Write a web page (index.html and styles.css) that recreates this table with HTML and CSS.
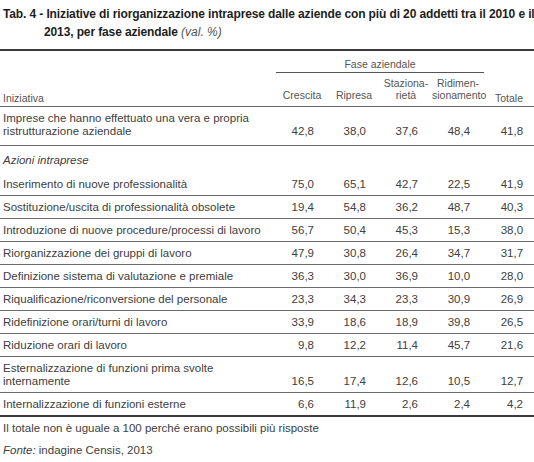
FILE: index.html
```html
<!DOCTYPE html>
<html lang="it">
<head>
<meta charset="utf-8">
<title>Tab. 4</title>
<link rel="stylesheet" href="styles.css">
</head>
<body>
<div class="page">
  <h1 class="title"><span class="lead">Tab. 4 - </span>Iniziative di riorganizzazione intraprese dalle aziende con più di 20 addetti tra il 2010 e il<br>2013, per fase aziendale <span class="unit">(val. %)</span></h1>
  <table class="data">
    <colgroup>
      <col class="c-label">
      <col class="c-num"><col class="c-num"><col class="c-num"><col class="c-num">
      <col class="c-tot">
    </colgroup>
    <thead>
      <tr class="h1">
        <th class="lbl" rowspan="2">Iniziativa</th>
        <th class="group" colspan="4">Fase aziendale</th>
        <th class="tot" rowspan="2">Totale</th>
      </tr>
      <tr class="h2">
        <th>Crescita</th>
        <th>Ripresa</th>
        <th>Staziona-<br>rietà</th>
        <th>Ridimen-<br>sionamento</th>
      </tr>
    </thead>
    <tbody>
      <tr class="first">
        <td class="lbl">Imprese che hanno effettuato una vera e propria<br>ristrutturazione aziendale</td>
        <td>42,8</td><td>38,0</td><td>37,6</td><td>48,4</td><td class="tot">41,8</td>
      </tr>
      <tr class="section">
        <td class="lbl" colspan="6">Azioni intraprese</td>
      </tr>
      <tr>
        <td class="lbl">Inserimento di nuove professionalità</td>
        <td>75,0</td><td>65,1</td><td>42,7</td><td>22,5</td><td class="tot">41,9</td>
      </tr>
      <tr>
        <td class="lbl">Sostituzione/uscita di professionalità obsolete</td>
        <td>19,4</td><td>54,8</td><td>36,2</td><td>48,7</td><td class="tot">40,3</td>
      </tr>
      <tr>
        <td class="lbl">Introduzione di nuove procedure/processi di lavoro</td>
        <td>56,7</td><td>50,4</td><td>45,3</td><td>15,3</td><td class="tot">38,0</td>
      </tr>
      <tr>
        <td class="lbl">Riorganizzazione dei gruppi di lavoro</td>
        <td>47,9</td><td>30,8</td><td>26,4</td><td>34,7</td><td class="tot">31,7</td>
      </tr>
      <tr>
        <td class="lbl">Definizione sistema di valutazione e premiale</td>
        <td>36,3</td><td>30,0</td><td>36,9</td><td>10,0</td><td class="tot">28,0</td>
      </tr>
      <tr>
        <td class="lbl">Riqualificazione/riconversione del personale</td>
        <td>23,3</td><td>34,3</td><td>23,3</td><td>30,9</td><td class="tot">26,9</td>
      </tr>
      <tr>
        <td class="lbl">Ridefinizione orari/turni di lavoro</td>
        <td>33,9</td><td>18,6</td><td>18,9</td><td>39,8</td><td class="tot">26,5</td>
      </tr>
      <tr>
        <td class="lbl">Riduzione orari di lavoro</td>
        <td>9,8</td><td>12,2</td><td>11,4</td><td>45,7</td><td class="tot">21,6</td>
      </tr>
      <tr>
        <td class="lbl">Esternalizzazione di funzioni prima svolte<br>internamente</td>
        <td>16,5</td><td>17,4</td><td>12,6</td><td>10,5</td><td class="tot">12,7</td>
      </tr>
      <tr class="last">
        <td class="lbl">Internalizzazione di funzioni esterne</td>
        <td>6,6</td><td>11,9</td><td>2,6</td><td>2,4</td><td class="tot">4,2</td>
      </tr>
    </tbody>
  </table>
  <p class="note">Il totale non è uguale a 100 perché erano possibili più risposte</p>
  <p class="source"><em>Fonte:</em> indagine Censis, 2013</p>
</div>
</body>
</html>
```

FILE: styles.css
```css
html, body {
  margin: 0;
  padding: 0;
  background: #ffffff;
  overflow: hidden;
}

.page {
  width: 534px;
  font-family: "Liberation Sans", Arial, sans-serif;
  color: #404040;
}

.title {
  margin: 0;
  padding: 5px 0 0 44px;
  text-indent: -41px;
  font-size: 12px;
  line-height: 18px;
  font-weight: bold;
  letter-spacing: -0.12px;
  color: #1e1e1e;
  height: 44px;
  box-sizing: border-box;
  white-space: nowrap;
}

.title .unit {
  font-weight: normal;
  font-style: italic;
  color: #555;
  letter-spacing: 0;
}

.data {
  width: 534px;
  border-collapse: collapse;
  table-layout: fixed;
  border-top: 2px solid #3a3a3a;
  border-bottom: 2px solid #3a3a3a;
  margin-top: 5px;
}

.c-label { width: 276px; }
.c-num { width: 52px; }
.c-tot { width: 50px; }

.data th {
  font-weight: normal;
  font-size: 10.5px;
  line-height: 12px;
  color: #555;
  text-align: center;
  padding: 0;
}

.data thead tr.h1 th {
  padding-top: 7px;
  padding-bottom: 2px;
}

.data th.group {
  border-bottom: 1px solid #555;
}

.data thead tr.h2 th {
  padding-top: 4px;
  padding-bottom: 5px;
  vertical-align: bottom;
}

.data th.lbl {
  text-align: left;
  padding-left: 3px;
  vertical-align: bottom;
  padding-bottom: 5px;
}

.data th.tot {
  vertical-align: bottom;
  padding-bottom: 5px;
  text-align: right;
  padding-right: 11px;
}

.data thead {
  border-bottom: 1px solid #666;
}

.data td {
  font-size: 11.5px;
  line-height: 13px;
  padding: 5px 14px 4px 0;
  text-align: right;
  vertical-align: bottom;
  border-bottom: 1px solid #6a6a6a;
  white-space: nowrap;
}

.data td.lbl {
  text-align: left;
  padding-left: 3px;
  padding-right: 0;
}

.data td.tot {
  padding-right: 11px;
}

.data tr.first td {
  padding-top: 5px;
  padding-bottom: 7px;
}

.data tr.section td {
  font-style: italic;
  border-bottom: none;
  padding-top: 8px;
  padding-bottom: 6px;
}

.data tr.last td {
  border-bottom: none;
}

.note, .source {
  margin: 0;
  padding-left: 3px;
  font-size: 11.5px;
  line-height: 13px;
}

.note {
  padding-top: 5px;
}

.source {
  padding-top: 9px;
}
```
